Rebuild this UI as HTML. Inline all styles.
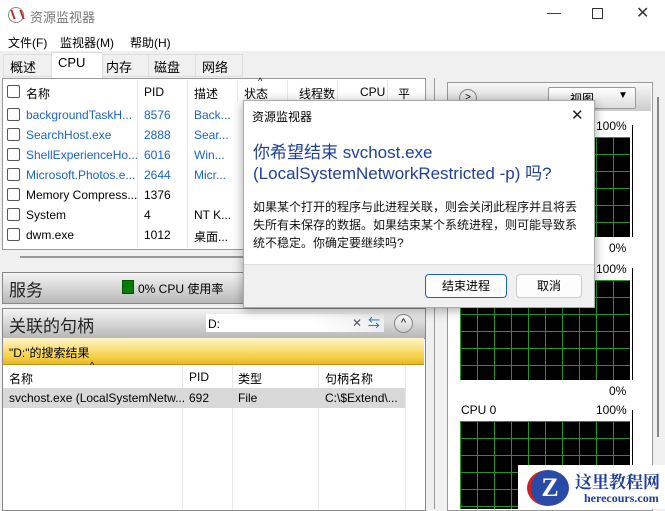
<html><head><style>
body{margin:0;width:665px;height:509px;overflow:hidden;background:#f0f0f0;font-family:"Liberation Sans","Noto Sans CJK SC",sans-serif;font-size:12px;color:#000;position:relative}
.a{position:absolute;white-space:nowrap}
.blue{color:#1a64c8}
.cb{position:absolute;width:11px;height:11px;border:1px solid #555;border-radius:2px;background:#fff}
.bar{position:absolute;background:linear-gradient(#f4f4f4,#d0d0d0 60%,#b8b8b8);border:1px solid #888}
.chart{position:absolute;background-color:#000;background-image:linear-gradient(90deg,#1f9a1f 1px,transparent 1px),linear-gradient(#1f9a1f 1px,transparent 1px);background-size:17px 17px}
</style></head><body>
<div class="a" style="left:0;top:0;width:665px;height:31px;background:#fff"></div>
<div class="a" style="left:8px;top:7px;width:14px;height:14px;border-radius:50%;border:1px solid #888;background:#fff"><div style="position:absolute;left:3px;top:2px;width:7px;height:9px;border-left:2px solid #c22;border-right:2px solid #c22;transform:skewX(20deg)"></div></div>
<div class="a" style="left:30px;top:7px;font-size:13px;color:#777">资源监视器</div>
<div class="a" style="left:547px;top:4px;font-size:14px;color:#333">—</div>
<div class="a" style="left:592px;top:8px;width:9px;height:9px;border:1px solid #333"></div>
<div class="a" style="left:636px;top:3px;font-size:16px;color:#333">✕</div>
<div class="a" style="left:0;top:31px;width:665px;height:20px;background:#fff"></div>
<div class="a" style="left:8px;top:34px;font-size:12px">文件(F)</div>
<div class="a" style="left:60px;top:34px">监视器(M)</div>
<div class="a" style="left:130px;top:34px">帮助(H)</div>
<div class="a" style="left:3px;top:54px;width:47px;height:21px;border:1px solid #ddd;background:#f0f0f0"></div><div class="a" style="left:10px;top:57px;font-size:13px">概述</div>
<div class="a" style="left:51px;top:52px;width:50px;height:25px;background:#fff;border:1px solid #ddd;border-bottom:none"></div><div class="a" style="left:58px;top:55px;font-size:13px">CPU</div>
<div class="a" style="left:102px;top:54px;width:45px;height:21px;border:1px solid #ddd"></div><div class="a" style="left:106px;top:57px;font-size:13px">内存</div>
<div class="a" style="left:148px;top:54px;width:46px;height:21px;border:1px solid #ddd"></div><div class="a" style="left:154px;top:57px;font-size:13px">磁盘</div>
<div class="a" style="left:195px;top:54px;width:46px;height:21px;border:1px solid #ddd"></div><div class="a" style="left:202px;top:57px;font-size:13px">网络</div>
<div class="a" style="left:2px;top:78px;width:422px;height:170px;background:#fff;border:1px solid #999"></div>
<div class="a" style="left:137px;top:80px;width:1px;height:168px;background:#e6e6e6"></div>
<div class="a" style="left:187px;top:80px;width:1px;height:168px;background:#e6e6e6"></div>
<div class="a" style="left:237px;top:80px;width:1px;height:22px;background:#e6e6e6"></div>
<div class="a" style="left:287px;top:80px;width:1px;height:22px;background:#e6e6e6"></div>
<div class="a" style="left:337px;top:80px;width:1px;height:22px;background:#e6e6e6"></div>
<div class="a" style="left:387px;top:80px;width:1px;height:22px;background:#e6e6e6"></div>
<div class="cb" style="left:7px;top:85px"></div><div class="a" style="left:26px;top:85px">名称</div>
<div class="a" style="left:144px;top:85px">PID</div><div class="a" style="left:194px;top:85px">描述</div>
<div class="a" style="left:244px;top:85px">状态</div><div class="a" style="left:258px;top:76px;font-size:9px">^</div><div class="a" style="left:299px;top:85px">线程数</div><div class="a" style="left:360px;top:85px">CPU</div><div class="a" style="left:398px;top:85px">平</div>
<div class="cb" style="left:7px;top:108px"></div><div class="a blue" style="left:26px;top:108px">backgroundTaskH...</div><div class="a blue" style="left:144px;top:108px">8576</div><div class="a blue" style="left:194px;top:108px">Back...</div>
<div class="cb" style="left:7px;top:128px"></div><div class="a blue" style="left:26px;top:128px">SearchHost.exe</div><div class="a blue" style="left:144px;top:128px">2888</div><div class="a blue" style="left:194px;top:128px">Sear...</div>
<div class="cb" style="left:7px;top:148px"></div><div class="a blue" style="left:26px;top:148px">ShellExperienceHo...</div><div class="a blue" style="left:144px;top:148px">6016</div><div class="a blue" style="left:194px;top:148px">Win...</div>
<div class="cb" style="left:7px;top:168px"></div><div class="a blue" style="left:26px;top:168px">Microsoft.Photos.e...</div><div class="a blue" style="left:144px;top:168px">2644</div><div class="a blue" style="left:194px;top:168px">Micr...</div>
<div class="cb" style="left:7px;top:188px"></div><div class="a" style="left:26px;top:188px">Memory Compress...</div><div class="a" style="left:144px;top:188px">1376</div>
<div class="cb" style="left:7px;top:208px"></div><div class="a" style="left:26px;top:208px">System</div><div class="a" style="left:144px;top:208px">4</div><div class="a" style="left:194px;top:208px">NT K...</div>
<div class="cb" style="left:7px;top:228px"></div><div class="a" style="left:26px;top:228px">dwm.exe</div><div class="a" style="left:144px;top:228px">1012</div><div class="a" style="left:194px;top:228px">桌面...</div>
<div class="a" style="left:20px;top:256px;width:225px;height:2px;background:#999"></div>
<div class="bar" style="left:2px;top:272px;width:422px;height:30px"></div>
<div class="a" style="left:9px;top:276px;font-size:17px;color:#222">服务</div>
<div class="a" style="left:122px;top:280px;width:10px;height:12px;background:#0a7a0a;border:1px solid #050"></div>
<div class="a" style="left:138px;top:280px">0% CPU 使用率</div>
<div class="a" style="left:2px;top:308px;width:422px;height:201px;background:#fff;border:1px solid #888"></div>
<div class="bar" style="left:2px;top:308px;width:422px;height:29px"></div>
<div class="a" style="left:9px;top:312px;font-size:17px;color:#222">关联的句柄</div>
<div class="a" style="left:206px;top:314px;width:178px;height:18px;background:linear-gradient(90deg,#fff 60%,#eee)"></div>
<div class="a" style="left:208px;top:317px">D:</div><div class="a" style="left:352px;top:316px;color:#556">✕</div>
<div class="a" style="left:368px;top:314px;font-size:12px;color:#1a64c8">⇆</div>
<div class="a" style="left:394px;top:314px;width:17px;height:17px;border-radius:50%;background:linear-gradient(#fff,#ccc);border:1px solid #888;text-align:center;font-size:11px;line-height:17px">^</div>
<div class="a" style="left:3px;top:338px;width:421px;height:26px;background:linear-gradient(#fff6cc,#f6d14a 70%,#e9b820);border-bottom:1px solid #b8962a"></div>
<div class="a" style="left:9px;top:344px">"D:"的搜索结果</div>
<div class="a" style="left:182px;top:365px;width:1px;height:144px;background:#e6e6e6"></div>
<div class="a" style="left:232px;top:365px;width:1px;height:144px;background:#e6e6e6"></div>
<div class="a" style="left:318px;top:365px;width:1px;height:144px;background:#e6e6e6"></div>
<div class="a" style="left:405px;top:365px;width:1px;height:144px;background:#e6e6e6"></div>
<div class="a" style="left:90px;top:360px;font-size:9px">^</div>
<div class="a" style="left:9px;top:370px">名称</div><div class="a" style="left:189px;top:370px">PID</div><div class="a" style="left:238px;top:370px">类型</div><div class="a" style="left:325px;top:370px">句柄名称</div>
<div class="a" style="left:3px;top:388px;width:402px;height:20px;background:#d9d9d9"></div>
<div class="a" style="left:9px;top:391px">svchost.exe (LocalSystemNetw...</div><div class="a" style="left:189px;top:391px">692</div><div class="a" style="left:238px;top:391px">File</div><div class="a" style="left:325px;top:391px">C:\$Extend\...</div>
<div class="a" style="left:434px;top:78px;width:1px;height:431px;background:#999"></div>
<div class="a" style="left:447px;top:82px;width:204px;height:427px;background:#fff;border:1px solid #999"></div>
<div class="a" style="left:448px;top:83px;width:203px;height:28px;background:linear-gradient(#f8f8f8,#ccc)"></div>
<div class="a" style="left:459px;top:89px;width:16px;height:16px;border-radius:50%;border:1px solid #888;text-align:center;font-size:10px;line-height:16px">&gt;</div>
<div class="a" style="left:548px;top:87px;width:86px;height:20px;border:1px solid #999;border-radius:2px;background:linear-gradient(#fff,#ddd)"></div>
<div class="a" style="left:570px;top:90px">视图</div><div class="a" style="left:618px;top:90px;font-size:10px">▼</div>
<div class="chart" style="left:460px;top:137px;width:170px;height:100px"></div>
<div class="a" style="left:596px;top:119px">100%</div><div class="a" style="left:609px;top:241px">0%</div>
<div class="a" style="left:596px;top:262px">100%</div>
<div class="chart" style="left:460px;top:280px;width:170px;height:100px"></div>
<div class="a" style="left:609px;top:384px">0%</div>
<div class="a" style="left:461px;top:403px">CPU 0</div><div class="a" style="left:596px;top:403px">100%</div>
<div class="chart" style="left:460px;top:421px;width:170px;height:88px"></div>
<div class="a" style="left:632px;top:125px;width:1px;height:112px;background:#000"></div>
<div class="a" style="left:632px;top:268px;width:1px;height:112px;background:#000"></div>
<div class="a" style="left:632px;top:410px;width:1px;height:99px;background:#000"></div>
<div class="a" style="left:657px;top:97px;width:2px;height:340px;background:#888"></div>
<div class="a" style="left:243px;top:100px;width:350px;height:206px;background:#fff;border:1px solid #aaa;box-shadow:0 2px 10px rgba(0,0,0,.35)"></div>
<div class="a" style="left:252px;top:108px;font-size:12px">资源监视器</div>
<div class="a" style="left:571px;top:106px;font-size:15px;color:#222">✕</div>
<div class="a" style="left:253px;top:142px;font-size:17px;color:#1e3f9e;line-height:21px">你希望结束 svchost.exe<br>(LocalSystemNetworkRestricted -p) 吗?</div>
<div class="a" style="left:253px;top:198px;font-size:12px;line-height:18px;color:#111">如果某个打开的程序与此进程关联，则会关闭此程序并且将丢<br>失所有未保存的数据。如果结束某个系统进程，则可能导致系<br>统不稳定。你确定要继续吗?</div>
<div class="a" style="left:244px;top:264px;width:350px;height:42px;background:#f0f0f0;border-top:1px solid #ddd"></div>
<div class="a" style="left:425px;top:274px;width:80px;height:22px;border:1px solid #1a64c8;border-radius:4px;background:#fdfdfd;text-align:center;line-height:22px">结束进程</div>
<div class="a" style="left:516px;top:274px;width:64px;height:22px;border:1px solid #ccc;border-radius:4px;background:#fdfdfd;text-align:center;line-height:22px">取消</div>
<div class="a" style="left:518px;top:465px;width:147px;height:44px;background:#fff"></div>
<div class="a" style="left:527px;top:470px;width:38px;height:36px;border-radius:50%;background:#2a4aa8;color:#fff;font-size:26px;font-weight:bold;text-align:center;line-height:36px;font-family:'Liberation Serif',serif;border-left:4px solid #c22">Z</div>
<div class="a" style="left:575px;top:468px;font-size:17px;font-weight:bold;color:#1e3f9e;font-family:'Liberation Serif','Noto Serif CJK SC',serif">这里教程网</div>
<div class="a" style="left:584px;top:491px;font-size:12px;font-weight:bold;color:#1e3f9e;font-family:'Liberation Serif',serif">herecours.com</div>
</body></html>
